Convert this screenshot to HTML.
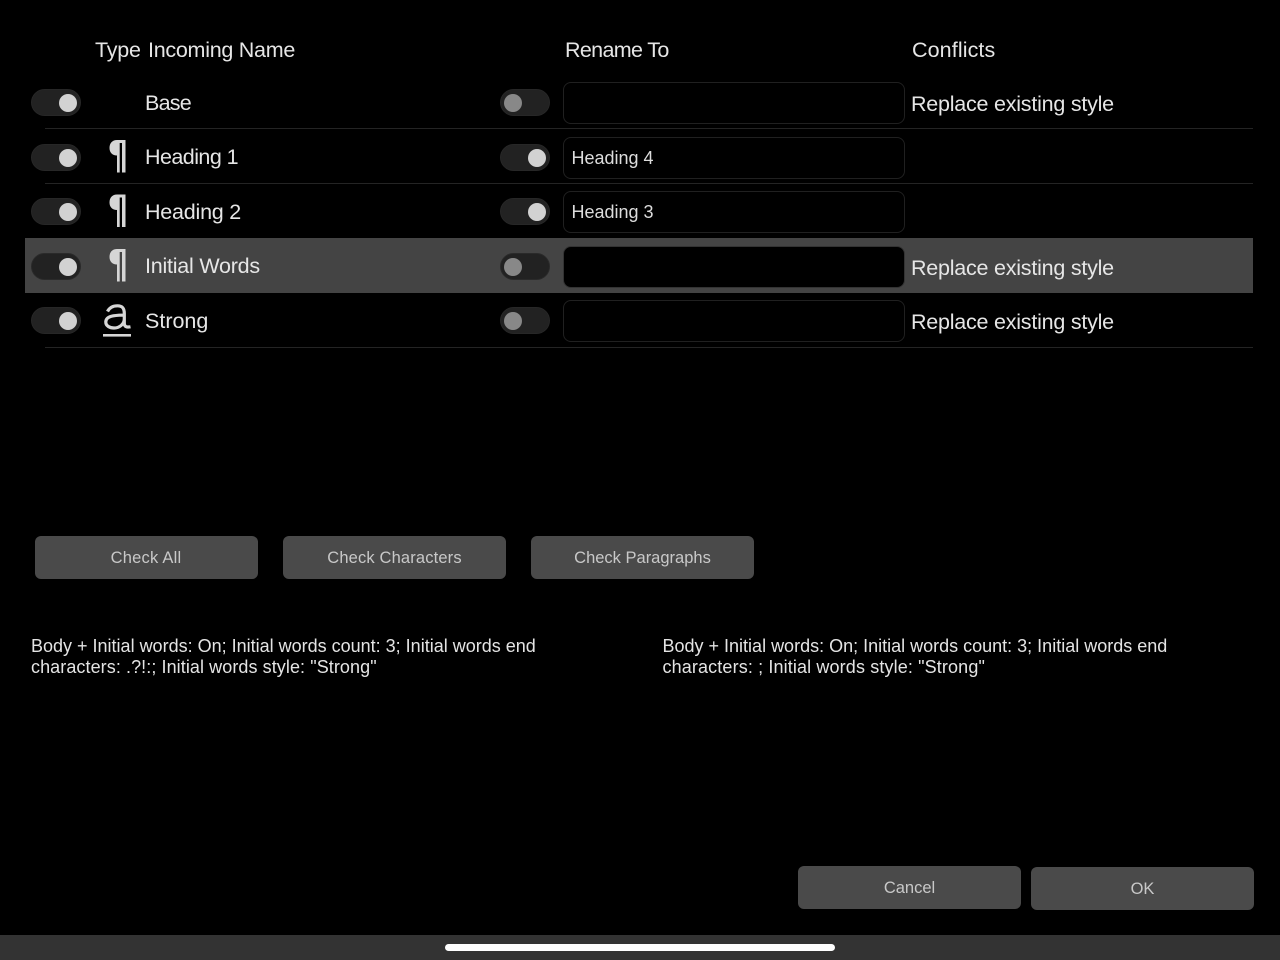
<!DOCTYPE html>
<html><head><meta charset="utf-8"><style>
html,body{margin:0;padding:0;background:#000;width:1280px;height:960px;overflow:hidden}
body{position:relative;font-family:"Liberation Sans",sans-serif}
.a{position:absolute;box-sizing:border-box}
.t{position:absolute;white-space:nowrap;line-height:30px;height:30px;color:#e8e8e8}
.h{font-size:21.5px;color:#e6e6e6}
.l{font-size:21.5px;color:#e6e6e6}
.r{font-size:21.5px;color:#e6e6e6;letter-spacing:-.23px}
.f{font-size:18px;color:#dcdcdc}
.b{position:absolute;box-sizing:border-box;background:#4a4a4a;border-radius:6px;color:#c8c8c8;font-size:16.5px;text-align:center;line-height:45px;height:43px;width:223px}
.p{font-size:18px;color:#e4e4e4}
.d{position:absolute;left:45px;width:1208px;height:1px;background:#242424}
.tg{position:absolute;width:50px;height:27px;border-radius:14px;background:#222;border:1px solid #272727;box-sizing:border-box}
.k{position:absolute;top:3.5px;width:18px;height:18px;border-radius:50%}
.on .k{left:26.5px;background:#d2d2d2}
.off .k{left:3px;background:#888}
.in{position:absolute;left:562.5px;width:342px;height:42px;border:1px solid #202020;border-radius:8px;background:#000;box-sizing:border-box}
svg{position:absolute;left:0;top:0}
</style></head><body>
<div class="a" style="left:25px;top:238px;width:1228px;height:55px;background:#444"></div>
<div class="d" style="top:128px"></div>
<div class="d" style="top:183px"></div>
<div class="d" style="top:346.5px"></div>
<div class="a" style="left:0;top:935px;width:1280px;height:25px;background:#333"></div>
<div class="a" style="left:445px;top:944px;width:390px;height:7px;border-radius:4px;background:#fff"></div>

<div class="t h" style="left:95px;top:35px;letter-spacing:-.2px">Type</div>
<div class="t h" style="left:148px;top:35px;letter-spacing:-.27px">Incoming Name</div>
<div class="t h" style="left:565px;top:35px;letter-spacing:-.65px">Rename To</div>
<div class="t h" style="left:912px;top:35px;letter-spacing:.1px">Conflicts</div>

<div class="tg on" style="left:31px;top:89px"><div class="k"></div></div>
<div class="tg on" style="left:31px;top:144px"><div class="k"></div></div>
<div class="tg on" style="left:31px;top:198px"><div class="k"></div></div>
<div class="tg on" style="left:31px;top:253px;border-color:#2a2a2a"><div class="k"></div></div>
<div class="tg on" style="left:31px;top:307px"><div class="k"></div></div>
<div class="tg off" style="left:500px;top:89px"><div class="k"></div></div>
<div class="tg on" style="left:500px;top:144px"><div class="k"></div></div>
<div class="tg on" style="left:500px;top:198px"><div class="k"></div></div>
<div class="tg off" style="left:500px;top:253px;border-color:#2a2a2a"><div class="k"></div></div>
<div class="tg off" style="left:500px;top:307px"><div class="k"></div></div>

<svg width="1280" height="960" viewBox="0 0 1280 960">
<defs><g id="pil" fill="#d6d6d6"><path d="M117 140H125.500V172.500H122V143H119.700V172.500H117V155.500C112.500 155.500 109.500 152.500 109.500 148C109.500 143 112.500 140 117 140Z"/></g></defs>
<use href="#pil"/>
<use href="#pil" y="54.500"/>
<use href="#pil" y="109"/>
<path d="M107.500 311.500C109.500 307.500 113.500 305.800 117.500 305.800C122.500 305.800 124.300 308.500 124.300 313.500V323.500C124.300 326.500 126.500 327.500 130.500 326.800M124.300 315C116 315.300 105.800 315.300 105.800 322C105.800 326 109.800 328 114 328C119 328 124.300 324.500 124.300 319" fill="none" stroke="#d6d6d6" stroke-width="3.200"/>
<rect x="103" y="334" width="28" height="2.600" fill="#d6d6d6"/>
</svg>

<div class="t l" style="left:145px;top:87.5px;letter-spacing:-.75px">Base</div>
<div class="t l" style="left:145px;top:142px;letter-spacing:-.55px">Heading 1</div>
<div class="t l" style="left:145px;top:196.5px;letter-spacing:-.22px">Heading 2</div>
<div class="t l" style="left:145px;top:251px;letter-spacing:-.23px">Initial Words</div>
<div class="t l" style="left:145px;top:305.5px">Strong</div>

<div class="in" style="top:82px"></div>
<div class="in" style="top:136.500px"></div>
<div class="in" style="top:191px"></div>
<div class="in" style="top:245.500px;border-color:#333"></div>
<div class="in" style="top:300.300px"></div>
<div class="t f" style="left:571.5px;top:143px">Heading 4</div>
<div class="t f" style="left:571.5px;top:197px">Heading 3</div>

<div class="t r" style="left:911px;top:89px">Replace existing style</div>
<div class="t r" style="left:911px;top:252.500px">Replace existing style</div>
<div class="t r" style="left:911px;top:307px">Replace existing style</div>

<div class="b" style="left:35px;top:536px;letter-spacing:.22px;padding-right:1px">Check All</div>
<div class="b" style="left:283px;top:536px;letter-spacing:.15px">Check Characters</div>
<div class="b" style="left:531px;top:536px">Check Paragraphs</div>

<div class="t p" style="left:31px;top:631px">Body + Initial words: On; Initial words count: 3; Initial words end</div>
<div class="t p" style="left:31px;top:652px;letter-spacing:.08px">characters: .?!:; Initial words style: "Strong"</div>
<div class="t p" style="left:662.5px;top:631px">Body + Initial words: On; Initial words count: 3; Initial words end</div>
<div class="t p" style="left:662.5px;top:652px;letter-spacing:.13px">characters: ; Initial words style: "Strong"</div>

<div class="b" style="left:798px;top:866px">Cancel</div>
<div class="b" style="left:1031px;top:867px">OK</div>
</body></html>
